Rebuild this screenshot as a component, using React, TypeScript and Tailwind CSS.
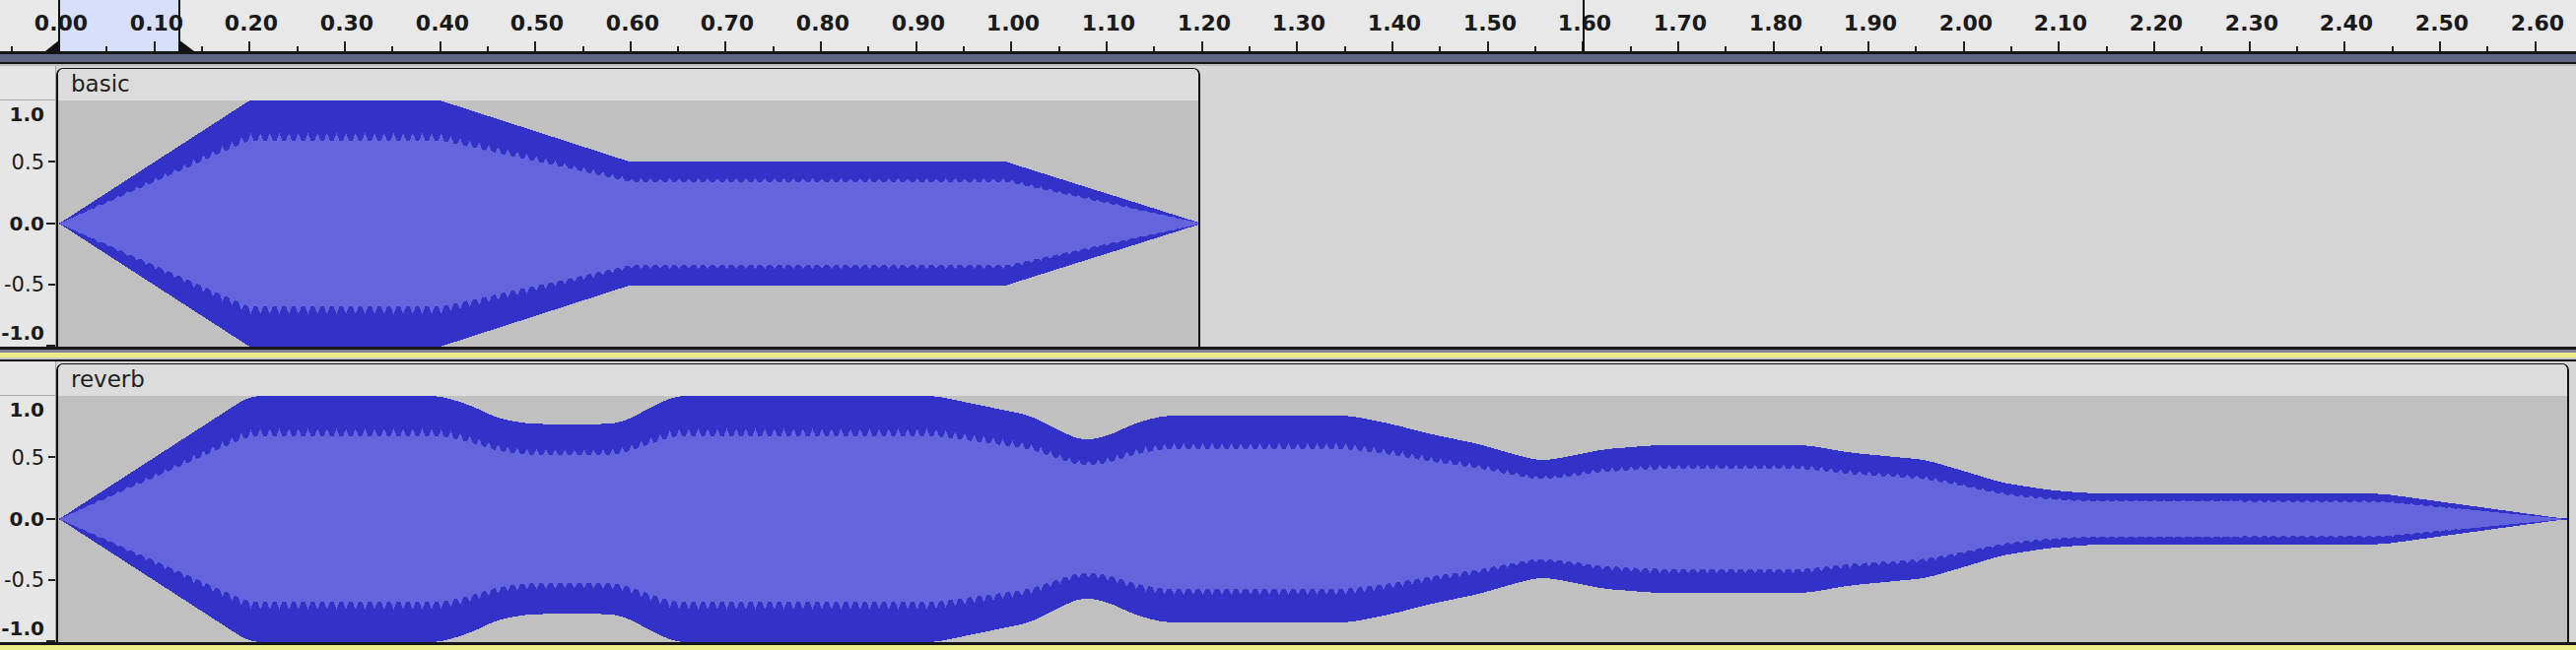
import React from "react";

const ORIGIN = 60;
const SCALE = 966.4;
const tx = (t: number) => ORIGIN + t * SCALE;

type Pt = [number, number];

function interp(points: Pt[], t: number) {
  if (t <= points[0][0]) return points[0][1];
  for (let i = 1; i < points.length; i++) {
    if (t <= points[i][0]) {
      const [t0, a0] = points[i - 1];
      const [t1, a1] = points[i];
      return a0 + ((a1 - a0) * (t - t0)) / (t1 - t0);
    }
  }
  return points[points.length - 1][1];
}

const BASIC: Pt[] = [
  [0, 0],
  [0.2, 1],
  [0.4, 1],
  [0.6, 0.5],
  [0.995, 0.5],
  [1.2, 0],
];

const REVERB: Pt[] = [
  [0, 0],
  [0.2, 1],
  [0.4, 1],
  [0.43, 0.93],
  [0.46, 0.82],
  [0.49, 0.775],
  [0.55, 0.765],
  [0.59, 0.78],
  [0.62, 0.9],
  [0.646, 1],
  [0.92, 1],
  [0.97, 0.92],
  [1.02, 0.84],
  [1.05, 0.72],
  [1.074, 0.635],
  [1.1, 0.67],
  [1.13, 0.78],
  [1.16, 0.84],
  [1.355, 0.84],
  [1.4, 0.77],
  [1.44, 0.69],
  [1.49, 0.61],
  [1.53, 0.52],
  [1.555, 0.472],
  [1.58, 0.5],
  [1.62, 0.565],
  [1.676, 0.6],
  [1.835, 0.6],
  [1.88, 0.54],
  [1.96, 0.48],
  [2.0, 0.39],
  [2.04, 0.295],
  [2.09, 0.235],
  [2.13, 0.21],
  [2.44, 0.205],
  [2.633, 0],
];

function makePaths(points: Pt[], width: number, smooth: number, tEnd: number) {
  const H = 125;
  const raw: number[] = [];
  for (let x = 0; x < width; x++) {
    const t = (x + 59.5 - ORIGIN) / SCALE;
    raw.push(t < 0 || t > tEnd ? 0 : Math.max(0, interp(points, t)));
  }
  const env =
    smooth > 0
      ? raw.map((v, i) => {
          if (v === 0) return 0;
          const t = (i + 59.5 - ORIGIN) / SCALE;
          if (t < 0.18 || t > 2.45) return v;
          let s = 0;
          let n = 0;
          for (let k = -smooth; k <= smooth; k++) {
            const j = i + k;
            if (j >= 0 && j < raw.length) {
              s += raw[j];
              n++;
            }
          }
          return Math.min(v + 0.02, s / n);
        })
      : raw;
  const top: string[] = [];
  const bot: string[] = [];
  const itop: string[] = [];
  const ibot: string[] = [];
  for (let x = 0; x < width; x++) {
    const e = env[x];
    const p = e > 0 ? Math.min(H, Math.max(1, Math.round(e * H))) : 0;
    const ph = ((x + 3) % 9.66) / 9.66;
    const spike = Math.max(0, 1 - Math.abs(ph - 0.5) * 3.2);
    const r = e > 0 ? Math.max(0, Math.round(e * H * (0.675 + 0.06 * spike))) : 0;
    top.push(`${x} ${H - p}`, `${x + 1} ${H - p}`);
    bot.push(`${x} ${H + p}`, `${x + 1} ${H + p}`);
    itop.push(`${x} ${H - r}`, `${x + 1} ${H - r}`);
    ibot.push(`${x} ${H + r}`, `${x + 1} ${H + r}`);
  }
  const outer = "M" + top.join(" L") + " L" + bot.reverse().join(" L") + " Z";
  const inner = "M" + itop.join(" L") + " L" + ibot.reverse().join(" L") + " Z";
  return { outer, inner };
}

function Ruler() {
  const ticks: { x: number; major: boolean }[] = [];
  for (let i = -1; i <= 53; i++) {
    const x = Math.round(tx(i * 0.05));
    if (x < 0 || x > 2614) continue;
    ticks.push({ x, major: i % 2 === 0 });
  }
  const labels: { x: number; text: string }[] = [];
  for (let i = 0; i <= 26; i++) {
    labels.push({ x: Math.round(tx(i * 0.1)) + 2, text: (i / 10).toFixed(2) });
  }
  return (
    <div className="relative h-[52px] shrink-0 bg-[#e8e8e8] overflow-hidden">
      <div className="absolute top-0 bottom-0 left-[61px] w-[121px] bg-[#d6e0fa]" />
      {labels.map((l) => (
        <span
          key={l.text}
          className="absolute top-[13px] -translate-x-1/2 whitespace-nowrap text-[22px] leading-[22px] font-bold text-[#1a1a1a] font-['DejaVu_Sans','Liberation_Sans',sans-serif]"
          style={{ left: l.x }}
        >
          {l.text}
        </span>
      ))}
      <svg className="absolute inset-0" width={2614} height={52} shapeRendering="crispEdges">
        {ticks.map((t) => (
          <rect
            key={t.x}
            x={t.x - 1}
            y={t.major ? 42 : 47}
            width={2}
            height={t.major ? 10 : 5}
            fill="#222"
          />
        ))}
        <rect x={59} y={0} width={2} height={52} fill="#111" />
        <rect x={181} y={0} width={2} height={52} fill="#111" />
        <rect x={1606} y={0} width={2} height={52} fill="#111" />
        <polygon points="46,52 61,52 61,40" fill="#111" shapeRendering="auto" />
        <polygon points="181,40 181,52 197,52" fill="#111" shapeRendering="auto" />
      </svg>
    </div>
  );
}

function AmpRuler() {
  const fontB = "font-bold text-[20px] leading-[20px] font-['DejaVu_Sans','Liberation_Sans',sans-serif]";
  const fontN = "text-[21px] leading-[20px] font-['DejaVu_Sans','Liberation_Sans',sans-serif]";
  return (
    <div className="w-[57px] shrink-0 bg-[#e6e6e6] border-r border-[#a4a4a4] flex flex-col">
      <div className="h-[35px] border-b border-[#a9a9a9]" />
      <div className="relative h-[250px] text-[#1a1a1a]">
        <span className={`absolute right-[11px] top-[4px] ${fontB}`}>1.0</span>
        <span className={`absolute right-[11px] top-[53px] ${fontN}`}>0.5</span>
        <span className={`absolute right-[11px] top-[115px] ${fontB}`}>0.0</span>
        <span className={`absolute right-[11px] top-[177px] ${fontN}`}>-0.5</span>
        <span className={`absolute right-[11px] top-[226px] ${fontB}`}>-1.0</span>
        <div className="absolute left-[49px] w-[7px] h-[2px] top-[61px] bg-[#222]" />
        <div className="absolute left-[47px] w-[9px] h-[2px] top-[124px] bg-[#222]" />
        <div className="absolute left-[49px] w-[7px] h-[2px] top-[186px] bg-[#222]" />
        <div className="absolute left-[47px] w-[9px] h-[2px] top-[248px] bg-[#222]" />
      </div>
    </div>
  );
}

function Track({
  name,
  points,
  clipRight,
  tEnd,
  smooth,
}: {
  name: string;
  points: Pt[];
  clipRight: number;
  tEnd: number;
  smooth: number;
}) {
  const clipWidth = clipRight - 57;
  const inner = clipWidth - 4;
  const { outer, inner: rms } = makePaths(points, inner, smooth, tEnd);
  return (
    <div className="flex h-[285px] shrink-0">
      <AmpRuler />
      <div className="flex-1 pt-[2px] bg-[#d6d6d6]">
        <div
          className="h-[283px] flex flex-col border-l-2 border-r-2 border-t border-[#111] rounded-t-[7px] overflow-hidden"
          style={{ width: clipWidth }}
        >
          <div className="h-[32px] shrink-0 bg-[#dcdcdc] pl-[13px] pt-[4px] text-[23px] leading-[23px] text-[#1e1e1e] font-['DejaVu_Sans','Liberation_Sans',sans-serif]">
            {name}
          </div>
          <svg width={inner} height={250} className="block shrink-0 bg-[#c0c0c0]" shapeRendering="crispEdges">
            <path d={outer} fill="#3232c8" />
            <path d={rms} fill="#6464dc" />
          </svg>
        </div>
      </div>
    </div>
  );
}

export default function App() {
  return (
    <div className="w-[2614px] h-[660px] bg-[#d6d6d6] flex flex-col overflow-hidden">
      <Ruler />
      <div className="h-[3px] shrink-0 bg-[#161616]" />
      <div className="h-[8px] shrink-0 bg-[#5f6682]" />
      <div className="h-[2px] shrink-0 bg-[#161616]" />
      <div className="h-[2px] shrink-0 bg-[#bdbdbd]" />
      <Track name="basic" points={BASIC} clipRight={1218} tEnd={1.2} smooth={0} />
      <div className="h-[3px] shrink-0 bg-[#161616]" />
      <div className="h-[3px] shrink-0 bg-[#80829a]" />
      <div className="h-[5px] shrink-0 bg-[#ecec88]" />
      <div className="h-[2px] shrink-0 bg-[#c8c8c8]" />
      <div className="h-[2px] shrink-0 bg-[#161616]" />
      <Track name="reverb" points={REVERB} clipRight={2607} tEnd={2.633} smooth={12} />
      <div className="h-[3px] shrink-0 bg-[#161616]" />
      <div className="h-[5px] shrink-0 bg-[#ecec88]" />
    </div>
  );
}
